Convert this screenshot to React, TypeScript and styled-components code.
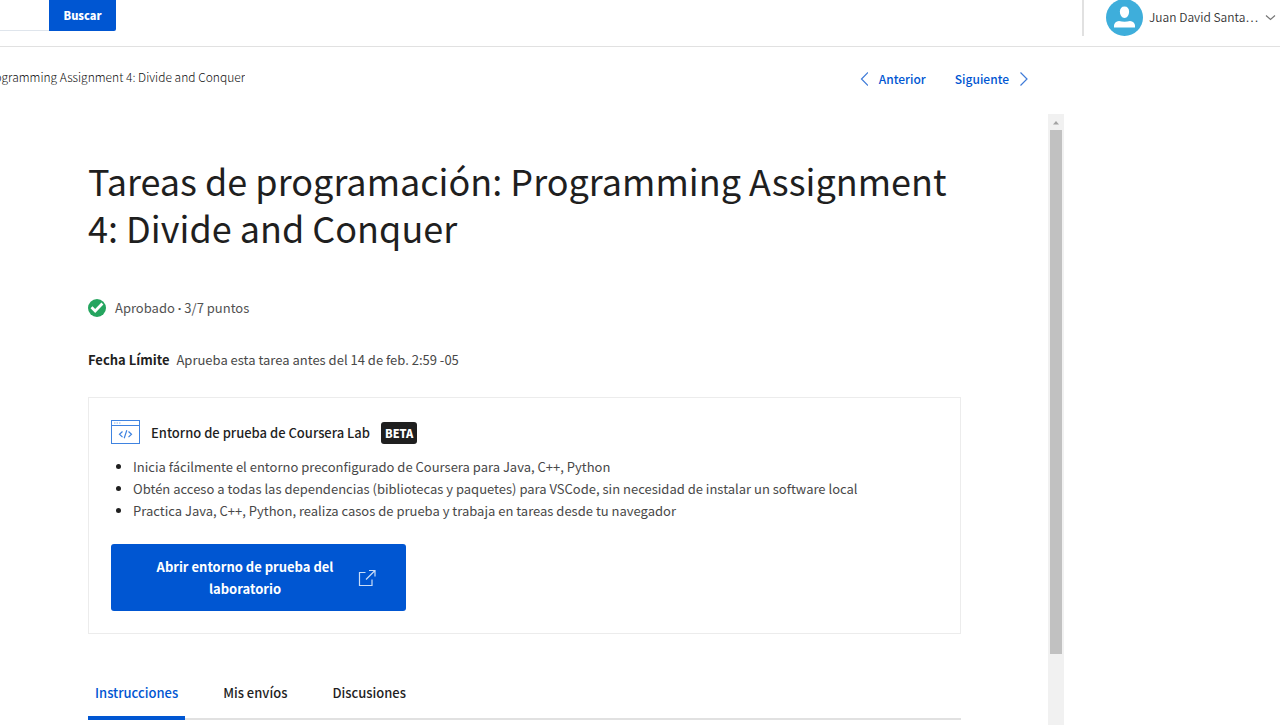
import React from "react";
import styled, { createGlobalStyle } from "styled-components";

const blue = "#0056d2";
const ink = "#1f1f1f";

const GlobalStyle = createGlobalStyle`
  *, *::before, *::after { box-sizing: border-box; }
  body {
    margin: 0;
    background: #fff;
    color: ${ink};
    font-family: "Noto Sans CJK SC", "Noto Sans", sans-serif;
    font-size: 13px;
    line-height: 22px;
  }
  button, input { font: inherit; }
`;

const Page = styled.div`
  display: flex;
  flex-direction: column;
  height: 100vh;
  overflow: hidden;
`;

const Header = styled.header`
  display: flex;
  justify-content: space-between;
  align-items: flex-start;
  height: 47px;
  flex: none;
  border-bottom: 1px solid #e1e1e1;
`;

const Search = styled.form`
  display: flex;
  height: 31px;
`;

const SearchInput = styled.input`
  width: 49px;
  border: 0;
  border-bottom: 1px solid #dfe5ec;
  outline: none;
  background: #fff;
`;

const SearchButton = styled.button`
  width: 67px;
  padding: 0 0 2px;
  border: 0;
  border-radius: 0 0 2px 0;
  background: ${blue};
  color: #fff;
  font-size: 11px;
  font-weight: 900;
`;

const Account = styled.button`
  display: flex;
  align-items: center;
  gap: 6px;
  height: 36px;
  padding: 0 4px 2px 22px;
  border: 0;
  border-left: 2px solid #e1e1e1;
  background: none;
  color: #333;
  font-size: 12px;
  font-weight: 350;
`;

const AccountName = styled.span`
  width: 110px;
  text-align: left;
  white-space: nowrap;
`;

const TopRow = styled.div`
  display: flex;
  justify-content: space-between;
  align-items: center;
  flex: none;
  height: 67px;
  padding: 0 252px 4px 0;
`;

const Crumb = styled.nav`
  display: flex;
  justify-content: flex-end;
  width: 245px;
  padding-bottom: 4px;
  overflow: hidden;
  white-space: nowrap;
  color: #111;
  font-size: 12px;
  font-weight: 300;
`;

const Pager = styled.nav`
  display: flex;
  gap: 29px;
`;

const PagerLink = styled.a`
  display: flex;
  align-items: center;
  gap: 11px;
  color: ${blue};
  font-size: 12px;
  font-weight: 500;
  text-decoration: none;
`;

const Scroller = styled.div`
  display: flex;
  flex: 1;
  min-height: 0;
  padding-right: 216px;
`;

const Content = styled.main`
  flex: 1;
  min-width: 0;
  padding: 43px 87px 0 88px;
  overflow: hidden;
`;

const ScrollTrack = styled.div`
  display: flex;
  flex-direction: column;
  align-items: center;
  width: 16px;
  background: #f1f1f1;
`;

const ScrollThumb = styled.div`
  width: 12px;
  height: 524px;
  flex: none;
  background: #c1c1c1;
`;

const Title = styled.h1`
  margin: 0;
  font-size: 36px;
  line-height: 47px;
  font-weight: 400;
`;

const Status = styled.p`
  display: flex;
  align-items: center;
  gap: 9px;
  margin: 46px 0 0;
  color: #525252;
`;

const Dot = styled.span`
  font-family: "Noto Sans", sans-serif;
  font-weight: 700;
`;

const Deadline = styled.p`
  display: flex;
  gap: 7px;
  margin: 30px 0 0;
  color: #484848;
`;

const Strong = styled.strong`
  color: ${ink};
  font-weight: 700;
`;

const LabCard = styled.section`
  margin-top: 26px;
  padding: 22px;
  border: 1px solid #ececec;
`;

const LabHeading = styled.h2`
  display: flex;
  align-items: center;
  gap: 11px;
  height: 26px;
  margin: 0;
  font-size: 13px;
  font-weight: 500;
`;

const Beta = styled.span`
  padding: 0 4px;
  border-radius: 3px;
  background: ${ink};
  color: #fff;
  font-size: 11px;
  font-weight: 900;
`;

const Features = styled.ul`
  margin: 10px 0 22px;
  padding-left: 22px;
  color: #484848;

  li::marker { color: ${ink}; }
`;

const LaunchButton = styled.button`
  display: flex;
  align-items: center;
  width: 295px;
  padding: 12px 30px 11px 44px;
  border: 0;
  border-radius: 3px;
  background: ${blue};
  color: #fff;
  font-weight: 700;
`;

const LaunchLabel = styled.span`
  width: 180px;
  margin-right: 23px;
`;

const Tabs = styled.div`
  display: flex;
  gap: 31px;
  margin-top: 44px;
  border-bottom: 2px solid #e1e1e1;
`;

const Tab = styled.button<{ $active?: boolean }>`
  height: 42px;
  margin-bottom: -2px;
  padding: 0 7px 8px;
  border: 0;
  border-bottom: 4px solid ${(p) => (p.$active ? blue : "transparent")};
  border-radius: 2px 2px 0 0;
  background: none;
  color: ${(p) => (p.$active ? blue : ink)};
  font-weight: 500;
`;

const Chevron = ({ d, w, h, color }: { d: string; w: number; h: number; color: string }) => (
  <svg width={w} height={h} viewBox={`0 0 ${w} ${h}`} fill="none" stroke={color} strokeWidth="1.200" aria-hidden="true">
    <path d={d} />
  </svg>
);

const Avatar = () => (
  <svg width="37" height="37" viewBox="0 0 37 37" aria-hidden="true">
    <circle cx="18.5" cy="18.5" r="18.5" fill="#3eaedb" />
    <path d="M18.500 7.500c3 0 4.600 2 4.600 5 0 3.300-1.800 6.500-4.600 6.500s-4.600-3.200-4.600-6.500c0-3 1.600-5 4.600-5z" fill="#fff" />
    <path d="M8 28.500v-2c0-2.500 2-4 5-4.600q5.500 1.500 11 0c3 .6 5 2.100 5 4.600v2z" fill="#fff" />
  </svg>
);

const CheckBadge = () => (
  <svg width="18" height="18" viewBox="0 0 18 18" aria-hidden="true">
    <circle cx="9" cy="9" r="9" fill="#25a55f" />
    <path d="M3.500 8.200l3.700 3.700 7.200-7.300" fill="none" stroke="#fff" strokeWidth="2.800" />
  </svg>
);

const CodeWindow = () => (
  <svg width="29" height="26" viewBox="0 0 29 26" fill="none" stroke="#3f83e0" aria-hidden="true">
    <rect x=".5" y=".5" width="28" height="23" />
    <path d="M.5 5.500h28" />
    <path d="M3 3h1.500M5.500 3h1.500M8 3h1.500" strokeOpacity=".6" />
    <path d="M11.500 11.500l-3 2.800 3 2.800M17.500 11.500l3 2.800-3 2.800M15.800 10.300l-2.600 8" strokeWidth="1.200" />
  </svg>
);

const ExternalIcon = () => (
  <svg width="18" height="18" viewBox="0 0 18 18" fill="none" stroke="#c9dcf7" strokeWidth="1.200" aria-hidden="true">
    <path d="M7.500 3.500H1.500v13h12.500v-6M8 10.500L17 1.500M11 1.500h6v6" />
  </svg>
);

export default function App() {
  return (
    <>
      <GlobalStyle />
      <Page>
        <Header>
          <Search onSubmit={(e) => e.preventDefault()}>
            <SearchInput aria-label="Buscar" />
            <SearchButton type="submit">Buscar</SearchButton>
          </Search>
          <Account type="button">
            <Avatar />
            <AccountName>Juan David Santa…</AccountName>
            <Chevron d="M1 1.500l4.500 4 4.500-4" w={11} h={7} color="#777" />
          </Account>
        </Header>
        <TopRow>
          <Crumb>Programming Assignment 4: Divide and Conquer</Crumb>
          <Pager>
            <PagerLink href="#anterior">
              <Chevron d="M8 .5L1.500 7 8 13.500" w={8} h={14} color="#3f7bd8" />
              Anterior
            </PagerLink>
            <PagerLink href="#siguiente">
              Siguiente
              <Chevron d="M.5.5L7 7 .5 13.500" w={8} h={14} color="#3f7bd8" />
            </PagerLink>
          </Pager>
        </TopRow>
        <Scroller>
          <Content>
            <Title>Tareas de programación: Programming Assignment 4: Divide and Conquer</Title>
            <Status>
              <CheckBadge />
              <span>Aprobado <Dot>·</Dot> 3/7 puntos</span>
            </Status>
            <Deadline>
              <Strong>Fecha Límite</Strong>
              <span>Aprueba esta tarea antes del 14 de feb. 2:59 -05</span>
            </Deadline>
            <LabCard>
              <LabHeading>
                <CodeWindow />
                Entorno de prueba de Coursera Lab
                <Beta>BETA</Beta>
              </LabHeading>
              <Features>
                <li>Inicia fácilmente el entorno preconfigurado de Coursera para Java, C++, Python</li>
                <li>Obtén acceso a todas las dependencias (bibliotecas y paquetes) para VSCode, sin necesidad de instalar un software local</li>
                <li>Practica Java, C++, Python, realiza casos de prueba y trabaja en tareas desde tu navegador</li>
              </Features>
              <LaunchButton type="button">
                <LaunchLabel>Abrir entorno de prueba del laboratorio</LaunchLabel>
                <ExternalIcon />
              </LaunchButton>
            </LabCard>
            <Tabs role="tablist">
              <Tab role="tab" aria-selected="true" $active>Instrucciones</Tab>
              <Tab role="tab" aria-selected="false">Mis envíos</Tab>
              <Tab role="tab" aria-selected="false">Discusiones</Tab>
            </Tabs>
          </Content>
          <ScrollTrack aria-hidden="true">
            <svg width="16" height="16" viewBox="0 0 16 16">
              <path d="M5 10.500l3-3.500 3 3.500z" fill="#a3a3a3" />
            </svg>
            <ScrollThumb />
          </ScrollTrack>
        </Scroller>
      </Page>
    </>
  );
}
